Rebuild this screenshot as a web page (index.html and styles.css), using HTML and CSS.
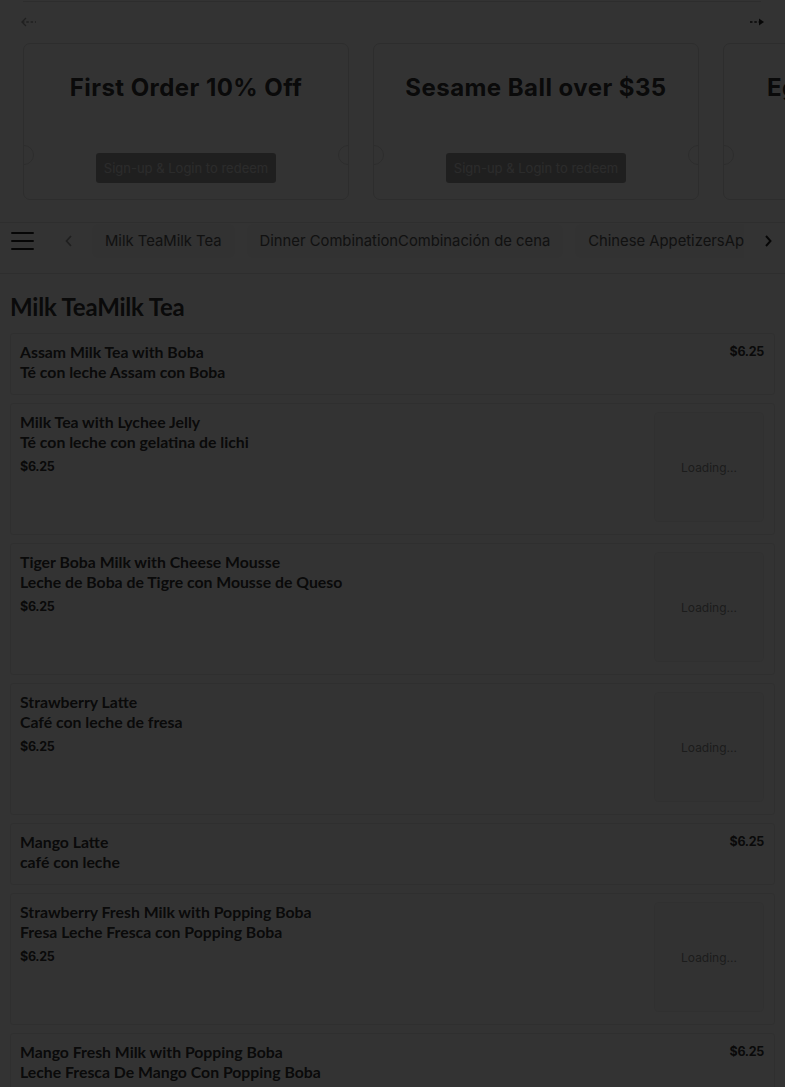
FILE: index.html
```html
<!DOCTYPE html>
<html lang="en">
<head>
<meta charset="utf-8">
<title>Menu</title>
<link rel="stylesheet" href="styles.css">
</head>
<body>
<div class="page">
  <div class="topline"></div>
  <section class="promos">
    <div class="promo-arrows">
      <button class="arrow arrow-prev" aria-label="Previous">
        <svg width="16" height="10" viewBox="0 0 16 10"><path d="M5 1 L1 5 L5 9" fill="none" stroke="currentColor" stroke-width="1.4"/><path d="M1 5 H15" fill="none" stroke="currentColor" stroke-width="1.4" stroke-dasharray="2.5 1.8"/></svg>
      </button>
      <button class="arrow arrow-next" aria-label="Next">
        <svg width="16" height="10" viewBox="0 0 16 10"><path d="M1 5 H13" fill="none" stroke="currentColor" stroke-width="1.4" stroke-dasharray="2.5 1.8"/><path d="M10 1.5 L15 5 L10 8.5 Z" fill="currentColor"/></svg>
      </button>
    </div>
    <div class="promo-track">
      <div class="coupon">
        <h3 class="coupon-title">First Order 10% Off</h3>
        <button class="coupon-btn">Sign-up &amp; Login to redeem</button>
      </div>
      <div class="coupon">
        <h3 class="coupon-title">Sesame Ball over $35</h3>
        <button class="coupon-btn">Sign-up &amp; Login to redeem</button>
      </div>
      <div class="coupon">
        <h3 class="coupon-title">Egg Rolls over $100</h3>
        <button class="coupon-btn">Sign-up &amp; Login to redeem</button>
      </div>
    </div>
  </section>

  <nav class="cat-nav">
    <button class="hamburger" aria-label="Menu"><span></span><span></span><span></span></button>
    <button class="chev chev-left" aria-label="Scroll left">
      <svg width="10" height="14" viewBox="0 0 10 14"><path d="M7 2 L2.5 7 L7 12" fill="none" stroke="currentColor" stroke-width="1.8"/></svg>
    </button>
    <div class="tabs">
      <a class="tab">Milk TeaMilk Tea</a>
      <a class="tab">Dinner CombinationCombinación de cena</a>
      <a class="tab">Chinese AppetizersAperitivos chinos</a>
      <a class="tab">Soup</a>
    </div>
    <button class="chev chev-right" aria-label="Scroll right">
      <svg width="10" height="14" viewBox="0 0 10 14"><path d="M3 2 L7.5 7 L3 12" fill="none" stroke="currentColor" stroke-width="2"/></svg>
    </button>
  </nav>

  <main class="menu">
    <h2 class="section-title">Milk TeaMilk Tea</h2>
    <div class="items">
      <div class="item">
        <div class="item-info">
          <div class="item-name">Assam Milk Tea with Boba<br>Té con leche Assam con Boba</div>
        </div>
        <div class="item-price">$6.25</div>
      </div>
      <div class="item item-img">
        <div class="item-info">
          <div class="item-name">Milk Tea with Lychee Jelly<br>Té con leche con gelatina de lichi</div>
          <div class="item-price">$6.25</div>
        </div>
        <div class="thumb">Loading...</div>
      </div>
      <div class="item item-img">
        <div class="item-info">
          <div class="item-name">Tiger Boba Milk with Cheese Mousse<br>Leche de Boba de Tigre con Mousse de Queso</div>
          <div class="item-price">$6.25</div>
        </div>
        <div class="thumb">Loading...</div>
      </div>
      <div class="item item-img">
        <div class="item-info">
          <div class="item-name">Strawberry Latte<br>Café con leche de fresa</div>
          <div class="item-price">$6.25</div>
        </div>
        <div class="thumb">Loading...</div>
      </div>
      <div class="item">
        <div class="item-info">
          <div class="item-name">Mango Latte<br>café con leche</div>
        </div>
        <div class="item-price">$6.25</div>
      </div>
      <div class="item item-img">
        <div class="item-info">
          <div class="item-name">Strawberry Fresh Milk with Popping Boba<br>Fresa Leche Fresca con Popping Boba</div>
          <div class="item-price">$6.25</div>
        </div>
        <div class="thumb">Loading...</div>
      </div>
      <div class="item">
        <div class="item-info">
          <div class="item-name">Mango Fresh Milk with Popping Boba<br>Leche Fresca De Mango Con Popping Boba</div>
        </div>
        <div class="item-price">$6.25</div>
      </div>
    </div>
  </main>
</div>
<div class="backdrop"></div>
</body>
</html>
```

FILE: styles.css
```css
* { box-sizing: border-box; }
html, body { margin: 0; padding: 0; }
body {
  background: #ffffff;
  color: #333;
  font-family: Inter, "Open Sans", Arial, sans-serif;
  overflow: hidden;
  height: 1087px;
}
button { font: inherit; background: none; border: 0; padding: 0; cursor: pointer; color: inherit; }

.topline {
  height: 2px;
  margin: 0 24px 0 23px;
  border-bottom: 1px solid #e0e0e0;
}

.promos { padding-bottom: 20px; }
.promo-arrows {
  height: 39px;
  display: flex;
  align-items: center;
  justify-content: space-between;
  padding: 0 20px 0 21px;
}
.arrow { display: flex; width: 16px; height: 12px; align-items: center; }
.arrow-prev { color: #9a9a9a; }
.arrow-next { color: #222; }

.promo-track {
  display: flex;
  gap: 24px;
  padding: 2px 0 0 23px;
  overflow: hidden;
}
.coupon {
  position: relative;
  flex: 0 0 326px;
  height: 157px;
  border: 1px solid #dedede;
  border-radius: 7px;
  display: flex;
  flex-direction: column;
  align-items: center;
  padding-top: 29px;
}
.coupon::before, .coupon::after {
  content: "";
  position: absolute;
  top: 101px;
  width: 18px;
  height: 18px;
  border-radius: 50%;
  background: #fff;
  border: 1px solid #dedede;
}
.coupon::before { left: -10px; clip-path: inset(-1px -1px -1px 50%); }
.coupon::after { right: -10px; clip-path: inset(-1px 50% -1px -1px); }
.coupon-title {
  margin: 0;
  font-size: 24px;
  line-height: 30px;
  font-weight: 700;
  color: #333;
  letter-spacing: 0.45px;
  white-space: nowrap;
}
.coupon-btn {
  margin-top: 50px;
  width: 180px;
  height: 30px;
  border-radius: 3px;
  background: #9c9c9c;
  color: #d8d8d8;
  font-size: 13px;
  white-space: nowrap;
}

.cat-nav {
  display: flex;
  align-items: center;
  height: 52px;
  padding-bottom: 14px;
  border-top: 1px solid #e4e4e4;
  border-bottom: 1px solid #e4e4e4;
  margin-top: 2px;
}
.hamburger {
  width: 23px;
  margin-left: 11px;
  display: flex;
  flex-direction: column;
  gap: 6px;
}
.hamburger span { display: block; height: 2px; background: #222; border-radius: 1px; }
.chev { display: flex; align-items: center; justify-content: center; width: 14px; height: 20px; }
.chev-left { color: #9a9a9a; margin-left: 28px; }
.chev-right { color: #222; margin: 0 10px 0 17px; }
.tabs {
  flex: 1;
  display: flex;
  gap: 12px;
  overflow: hidden;
  margin-left: 16px;
  height: 36px;
  align-items: center;
}
.tab {
  flex: none;
  display: flex;
  align-items: center;
  height: 34px;
  padding: 0 13px;
  border-radius: 6px;
  background: #f7f7f7;
  color: #555;
  font-size: 14.8px;
  white-space: nowrap;
}

.menu { padding: 0 10px; }
.section-title {
  margin: 18px 0 11px;
  font-family: Lato, "Open Sans", sans-serif;
  font-size: 24px;
  line-height: 30px;
  font-weight: 700;
  color: #333;
  letter-spacing: -0.2px;
}
.items { display: flex; flex-direction: column; gap: 8px; }
.item {
  display: flex;
  justify-content: space-between;
  align-items: flex-start;
  border: 1px solid #ececec;
  border-radius: 3px;
  padding: 8px 10px 12px 9px;
  background: #fff;
}
.item-name {
  font-family: Lato, "Open Sans", sans-serif;
  font-weight: 700;
  font-size: 15.8px;
  line-height: 20px;
  color: #333;
}
.item-price {
  font-family: Inter, sans-serif;
  font-weight: 700;
  font-size: 12.5px;
  line-height: 18px;
  color: #333;
  letter-spacing: -0.3px;
}
.item > .item-price { margin-top: 1px; }
.item-img .item-price { margin-top: 6px; }
.thumb {
  flex: none;
  width: 110px;
  height: 110px;
  border: 1px solid #f0f0f0;
  border-radius: 4px;
  background: #fbfbfb;
  display: flex;
  align-items: center;
  justify-content: center;
  font-size: 12px;
  color: #8a8a8a;
}

.backdrop {
  position: fixed;
  inset: 0;
  background: rgba(0, 0, 0, 0.8);
}
```
